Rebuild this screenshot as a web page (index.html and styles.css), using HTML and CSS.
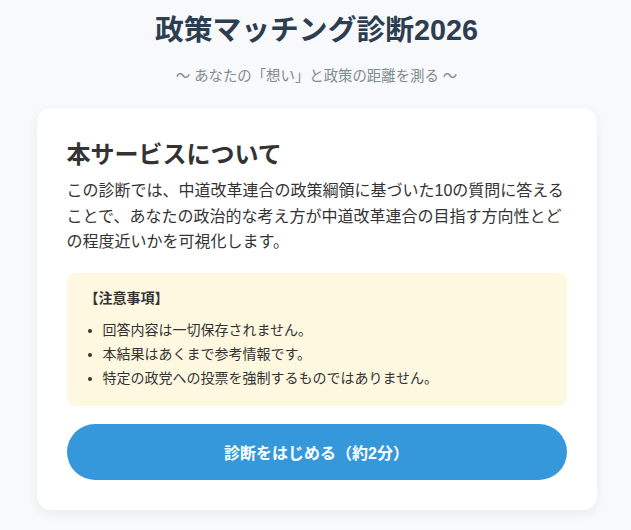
FILE: index.html
```html
<!DOCTYPE html>
<html lang="ja">
<head>
<meta charset="utf-8">
<title>政策マッチング診断2026</title>
<link rel="stylesheet" href="styles.css">
</head>
<body>
<div class="page">
  <header class="header">
    <h1 class="title">政策マッチング診断2026</h1>
    <p class="subtitle">〜 あなたの「想い」と政策の距離を測る 〜</p>
  </header>
  <main class="card">
    <h2 class="card-title">本サービスについて</h2>
    <p class="lead">この診断では、中道改革連合の政策綱領に基づいた10の質問に答えることで、あなたの政治的な考え方が中道改革連合の目指す方向性とどの程度近いかを可視化します。</p>
    <div class="notice">
      <p class="notice-title">【注意事項】</p>
      <ul class="notice-list">
        <li>回答内容は一切保存されません。</li>
        <li>本結果はあくまで参考情報です。</li>
        <li>特定の政党への投票を強制するものではありません。</li>
      </ul>
    </div>
    <button class="start-btn" type="button">診断をはじめる（約2分）</button>
  </main>
</div>
</body>
</html>
```

FILE: styles.css
```css
html, body {
  margin: 0;
  padding: 0;
}
body {
  background: #f7f9fb;
  font-family: "Liberation Sans", "Noto Sans CJK JP", sans-serif;
  color: #333;
}
.page {
  max-width: 560px;
  margin: 0 auto;
  padding: 9px 0 20px 2px;
}
.header {
  text-align: center;
}
.title {
  margin: 0;
  font-size: 28.8px;
  line-height: 1.5;
  font-weight: 700;
  color: #2c3e50;
}
.subtitle {
  margin: 14px 0 0;
  font-size: 14.4px;
  line-height: 1.5;
  color: #7f8c8d;
}
.card {
  display: block;
  margin-top: 20px;
  background: #fff;
  border-radius: 14px;
  box-shadow: 0 4px 12px rgba(0, 0, 0, 0.06);
  padding: 31px 30px 30px;
}
.card-title {
  margin: 0;
  font-size: 24px;
  line-height: 1.3;
  font-weight: 700;
  color: #333;
}
.lead {
  margin: 8px 0 0;
  font-size: 16px;
  line-height: 1.6;
}
.notice {
  margin-top: 18px;
  background: #fef8e1;
  border-radius: 8px;
  padding: 14px 18px 15px;
}
.notice-title {
  margin: 0;
  font-size: 14px;
  font-weight: 700;
  line-height: 1.6;
}
.notice-list {
  margin: 10px 0 0;
  padding-left: 18px;
  font-size: 14px;
  line-height: 1.7;
}
.start-btn {
  display: block;
  width: 100%;
  height: 56px;
  margin-top: 18px;
  border: none;
  border-radius: 28px;
  background: #3498db;
  color: #fff;
  font-family: inherit;
  font-size: 16px;
  font-weight: 700;
  cursor: pointer;
}
```
